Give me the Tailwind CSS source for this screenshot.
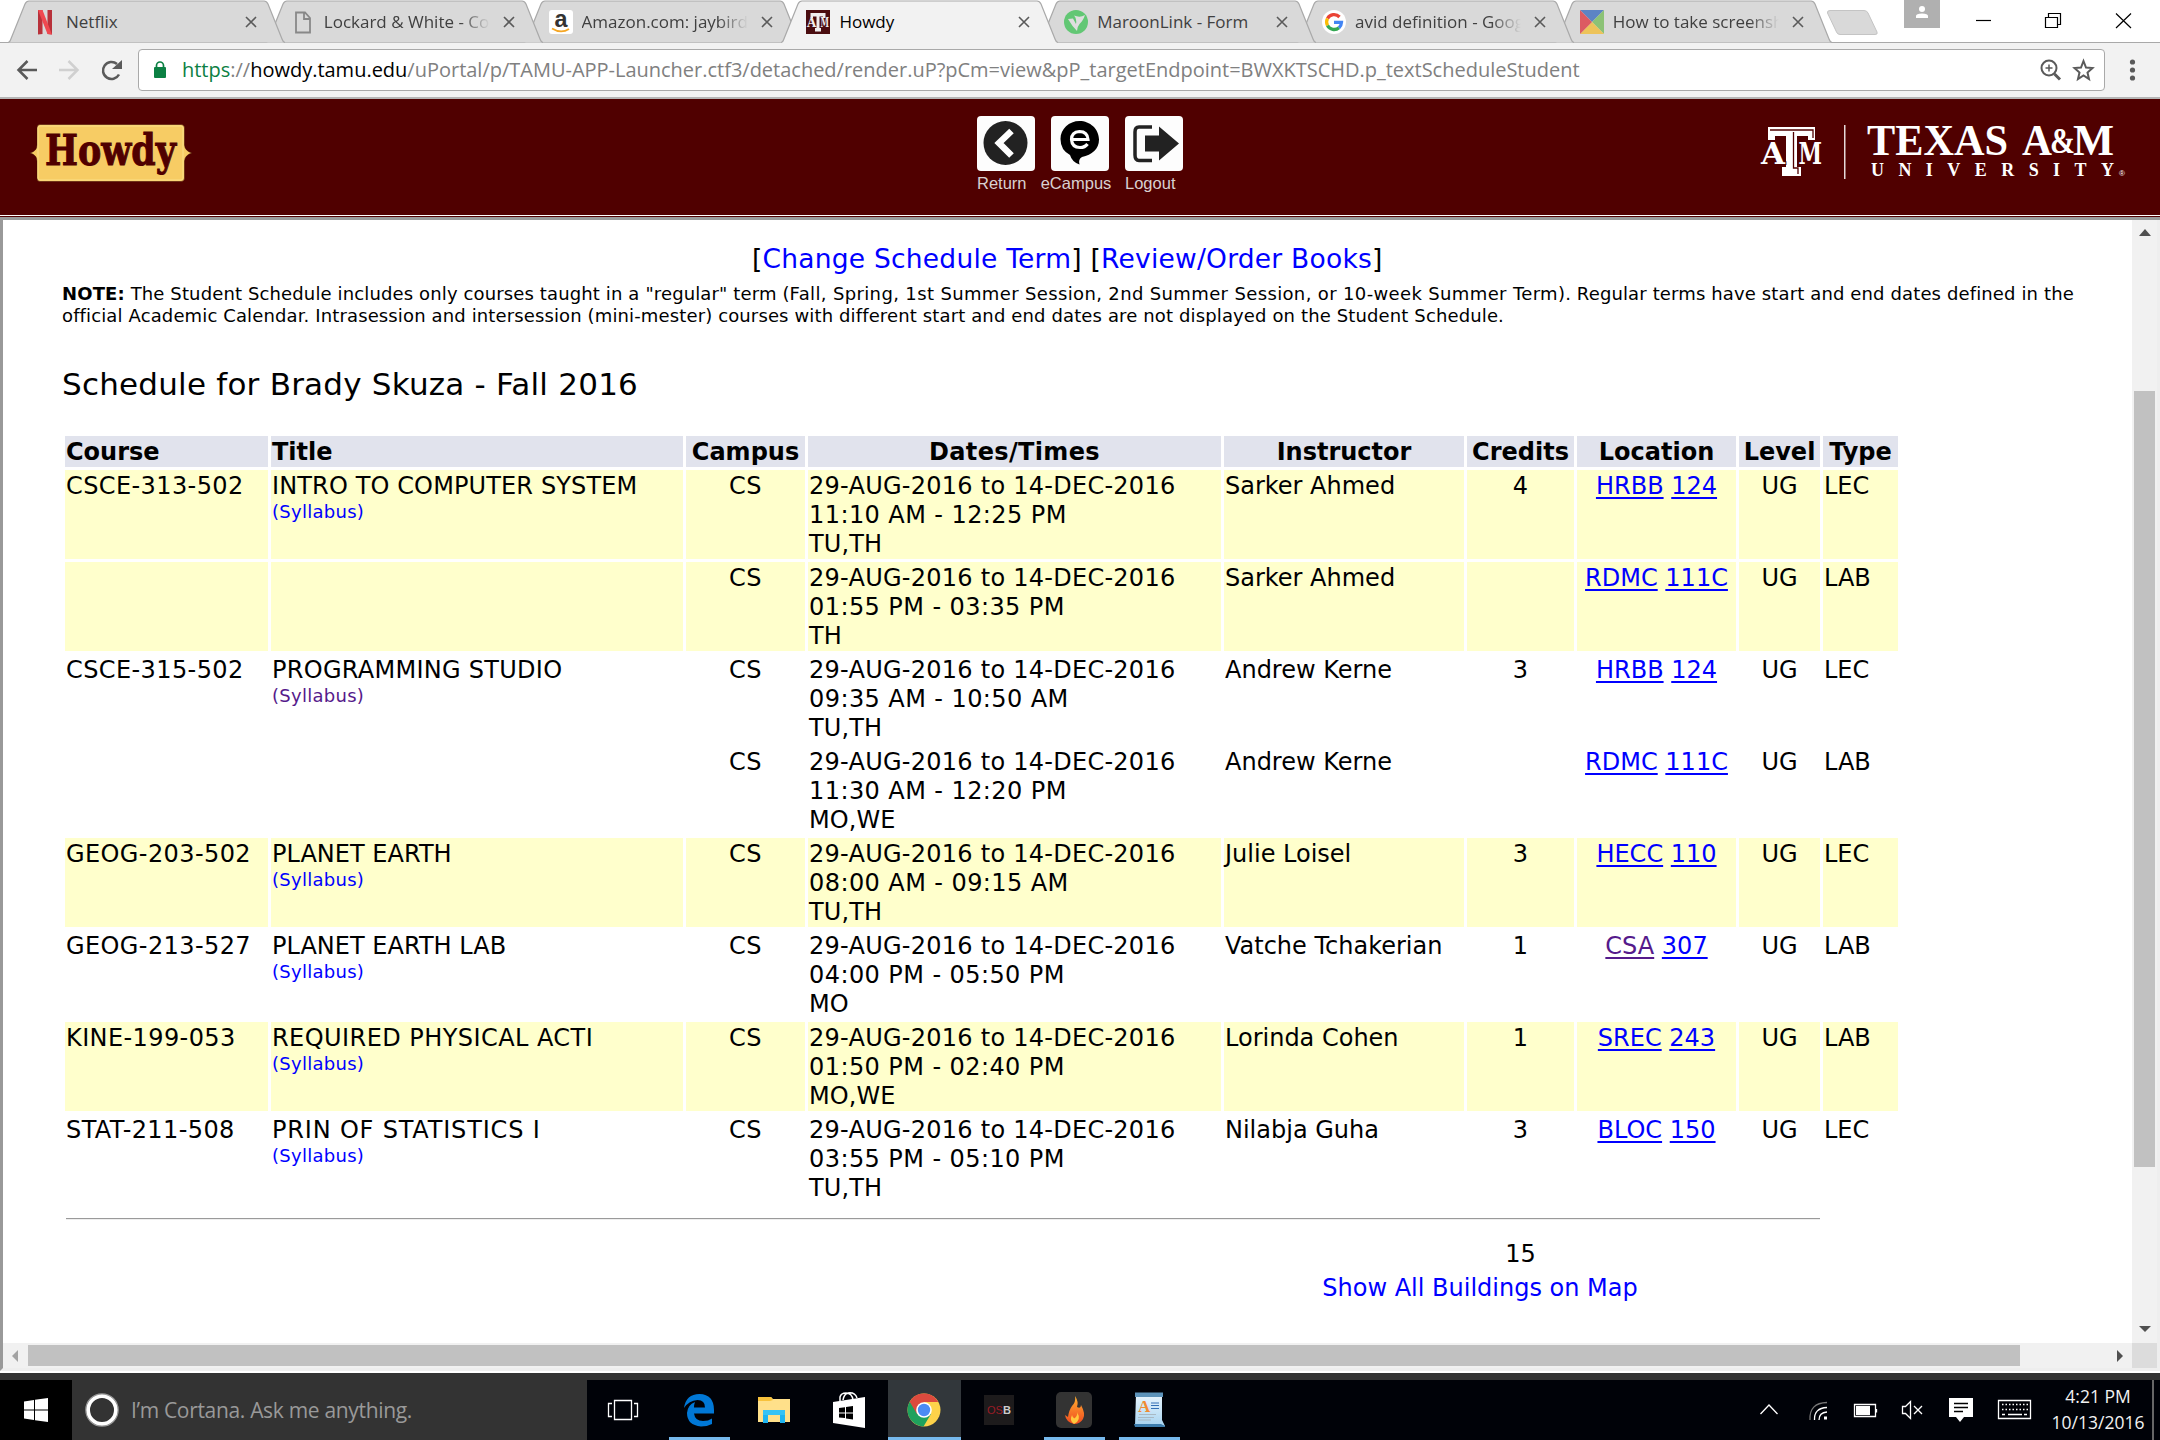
<!DOCTYPE html>
<html lang="en">
<head>
<meta charset="utf-8">
<title>Howdy</title>
<script src="https://cdn.jsdelivr.net/npm/@tailwindcss/browser@4"></script>
</head>
<body class="w-[2160px] h-[1440px] overflow-hidden flex flex-col bg-white font-['DejaVu_Sans',sans-serif] text-black">

<!-- Tab strip -->
<header class="relative h-[43px] shrink-0 bg-white border-b border-[#a9a9a9] font-['Open_Sans',sans-serif]">
  <div id="tabs" class="absolute left-[8px] top-0 flex h-[43px]"></div>
  <svg class="absolute left-[1825px] top-[8px]" width="56" height="30"><path d="M5 2.500H39Q42 2.500 43 5L52 24Q53 26.500 50 26.500H15Q12.500 26.500 11.500 24L2.500 5Q2 2.500 5 2.500Z" fill="#d9d9d9" stroke="#c4c4c4"/></svg>
  <div class="absolute left-[1904px] top-0 w-[36px] h-[28px] bg-[#b0b0b0] flex justify-center"><svg width="36" height="28"><circle cx="18" cy="9" r="3" fill="#fff"/><path d="M12 18V16Q12 13.500 18 13.500T24 16V18Z" fill="#fff"/></svg></div>
  <svg class="absolute left-[1970px] top-[8px]" width="170" height="26" fill="none" stroke="#000" stroke-width="1.200"><path d="M6 12.500H21"/><path d="M75.500 9.500H87.500V19.500H75.500ZM78.500 9.500V5.500H90.500V16.500H87.500"/><path d="M146 5.500L161 20M161 5.500L146 20"/></svg>
</header>

<!-- Toolbar -->
<nav class="h-[56px] shrink-0 bg-[#f2f2f2] border-b-2 border-[#b5b5b5] flex items-center pl-[14px] font-['Open_Sans',sans-serif]">
  <svg class="shrink-0" width="124" height="40" viewBox="14 50 124 40" fill="none" stroke="#5a5a5a" stroke-width="2.500">
    <path d="M37 70H19M27.500 61L18.500 70L27.500 79"/>
    <path d="M59 70H77M68.500 61L77.500 70L68.500 79" stroke="#d0d0d0"/>
    <path d="M119 74.500A8.500 8.500 0 1 1 117 64"/><path d="M122 60V69H112Z" fill="#5a5a5a" stroke="none"/>
  </svg>
  <div class="w-[1967px] h-[42px] bg-white border border-[#a9a9a9] rounded-[4px] flex items-center">
    <svg class="ml-[15px]" width="12" height="18" viewBox="0 0 12 18"><rect y="6" width="12" height="11" rx="1" fill="#0b8043"/><path d="M2.500 7V4.500a3.500 3.500 0 0 1 7 0V7" fill="none" stroke="#0b8043" stroke-width="1.700"/></svg>
    <div class="ml-[16px] text-[20px] tracking-[-0.010px] whitespace-nowrap text-[#808080]"><span class="text-[#0b8043]">https</span>://<span class="text-black">howdy.tamu.edu</span>/uPortal/p/TAMU-APP-Launcher.ctf3/detached/render.uP?pCm=view&amp;pP_targetEndpoint=BWXKTSCHD.p_textScheduleStudent</div>
    <svg class="ml-auto mr-[9px]" width="56" height="26" fill="none" stroke="#5a5a5a" stroke-width="2"><circle cx="10" cy="11" r="7.500"/><path d="M15.500 17L21 22.500" stroke-width="3"/><path d="M6.500 11H13.500M10 7.500V14.500" stroke-width="1.500"/><path d="M44.500 4L47 10.500L53.500 11L48.500 15.500L50 22L44.500 18.500L39 22L40.500 15.500L35.500 11L42 10.500Z"/></svg>
  </div>
  <svg class="ml-[22px]" width="12" height="26" fill="#5a5a5a"><circle cx="5.500" cy="5" r="2.600"/><circle cx="5.500" cy="13" r="2.600"/><circle cx="5.500" cy="21" r="2.600"/></svg>
</nav>

<!-- Howdy banner -->
<section class="h-[116px] shrink-0 bg-[#500000] flex items-start pl-[30px] font-['Liberation_Sans',sans-serif]">
  <svg class="mt-[20px] shrink-0" width="164" height="66" viewBox="30 119 164 66">
    <path d="M40 124.500H181Q184.500 124.500 184.500 128V145Q185 151 192 153Q185 155 184.500 161V178Q184.500 181.500 181 181.500H40Q37 181.500 37 178V161Q37 155 30 153Q37 151 37 145V128Q37 124.500 40 124.500Z" fill="#f7cc64" stroke="#3a0000" stroke-width="0.500"/>
    <path d="M40 126H181Q183 126 183 128V178Q183 180 181 180H40Q38 180 38 178V128Q38 126 40 126Z" fill="none" stroke="#fbe089" stroke-width="1"/>
    <text x="45" y="165" font-family="DejaVu Serif" font-weight="bold" font-size="43" textLength="131" lengthAdjust="spacingAndGlyphs" fill="#500000" stroke="#500000" stroke-width="1">Howdy</text>
  </svg>
  <div class="flex gap-[16px] mt-[17px] ml-[783px] text-[16.500px] leading-[22px] text-[#d9d0d0]">
    <div class="w-[58px]"><svg width="58" height="55"><rect width="58" height="55" rx="4" fill="#fdfdfd"/><circle cx="28.500" cy="27" r="22" fill="#222"/><path d="M34.500 15L22 27L34.500 39.500" fill="none" stroke="#fff" stroke-width="6.500"/></svg><div class="mt-[1px]">Return</div></div>
    <div class="w-[58px] flex flex-col items-center"><svg width="58" height="55"><rect width="58" height="55" rx="4" fill="#fdfdfd"/><path d="M28.500 5C39 5 48 13 48 23.500C48 33 41 39 31 41Q27 43 28.500 48.500Q21 46 19 39Q9.500 34 9.500 23C9.500 13 18 5 28.500 5Z" fill="#000"/><path d="M20.500 23.500H37Q36.500 15.500 28.500 15.500Q20.500 16 20.500 23.500Q21 31.500 29 31.500Q34 31.500 36.500 28" fill="none" stroke="#fff" stroke-width="3.200"/></svg><div class="mt-[1px] mr-[6px] -ml-[2px]">eCampus</div></div>
    <div class="w-[58px]"><svg width="58" height="55"><rect width="58" height="55" rx="4" fill="#fdfdfd"/><path d="M27 11H14Q10 11 10 16V39Q10 44.500 14 44.500H27" fill="none" stroke="#222" stroke-width="3.500"/><path d="M20 19.500H34V10.500L54 27.500L34 44.500V35.500H20Z" fill="#222"/></svg><div class="mt-[1px]">Logout</div></div>
  </div>
  <svg class="mt-[20px] ml-auto mr-[28px]" width="372" height="66" viewBox="1760 119 372 66" fill="#fff">
    <path d="M1768 127H1815V140H1808V136H1797V167H1801V176H1782V167H1786V136H1775V140H1768Z"/>
    <path d="M1770 130H1813V138M1793.500 132V168H1798V174" fill="none" stroke="#500000" stroke-width="1.300"/>
    <g stroke="#500000" stroke-width="2" paint-order="stroke" font-family="DejaVu Serif" font-weight="bold" font-size="30"><text x="1761" y="164" textLength="24" lengthAdjust="spacingAndGlyphs">A</text><text x="1798.500" y="164" textLength="23.500" lengthAdjust="spacingAndGlyphs">M</text></g>
    <rect x="1844" y="125" width="1.500" height="54" fill="#e5d8d8"/>
    <g font-family="Liberation Serif" font-weight="bold"><text x="1867" y="155" font-size="44" textLength="141" lengthAdjust="spacingAndGlyphs">TEXAS</text><text x="2022" y="155" font-size="44" textLength="30" lengthAdjust="spacingAndGlyphs">A</text><text x="2050" y="152.500" font-size="35" textLength="25" lengthAdjust="spacingAndGlyphs">&amp;</text><text x="2073" y="155" font-size="44" textLength="41" lengthAdjust="spacingAndGlyphs">M</text>
    <text x="1871" y="176" font-size="18" textLength="243">UNIVERSITY</text></g>
    <text x="2119" y="176" font-size="8" font-family="Liberation Sans">®</text>
  </svg>
</section>
<div class="h-[5px] shrink-0 bg-[#999] border-t border-white shadow-[inset_0_1px_0_#500000]"></div>

<!-- Schedule frame -->
<main class="h-[1151px] shrink-0 flex flex-col border-l-[3px] border-l-[#999] border-r-[3px] border-r-[#eee] border-b-[3px] border-b-[#eee]">
  <div class="h-[1123px] flex">
    <div class="flex-1 overflow-hidden pl-[59px] whitespace-nowrap">
      <p class="mt-[23px] ml-[690px] text-[26.500px] leading-[32px] tracking-[0.220px]">[<a class="text-[#0000ff]">Change Schedule Term</a>] [<a class="text-[#0000ff]">Review/Order Books</a>]</p>
      <p class="mt-[8px] text-[18px] leading-[22px] tracking-[0.130px]"><b>NOTE:</b> The Student Schedule includes only courses taught in a "regular" term (<span class="tracking-[0.360px]">Fall, Spring, 1st Summer Session, 2nd Summer Session, or 10-week Summer Term</span>). Regular terms have start and end dates defined in the<br>official Academic Calendar. Intrasession and intersession (mini-mester) courses with different start and end dates are not displayed on the Student Schedule.</p>
      <h1 class="mt-[38px] text-[31px] leading-[38px] tracking-[0.220px]">Schedule for Brady Skuza - Fall 2016</h1>
      <div id="schedule" class="mt-[33px] ml-[3px] grid grid-cols-[203px_412px_119px_413px_240px_107px_159px_81px_75px] gap-[3px] text-[24px] leading-[29px]"></div>
      <div class="mt-[15px] ml-[4px] w-[1754px] h-[2px] bg-[#9a9a9a] border-b border-[#eee]"></div>
      <div class="mt-[20px] ml-[1405px] w-[107px] text-center text-[24px] leading-[29px]">15</div>
      <div class="mt-[5px] ml-[1260px] w-[316px] text-center text-[24px] leading-[29px]"><a class="text-[#0000ff]">Show All Buildings on Map</a></div>
    </div>
    <div class="w-[25px] bg-[#f1f1f1] flex flex-col items-center">
      <svg class="mt-[9px]" width="12" height="8"><path d="M0 7L6 0L12 7Z" fill="#505050"/></svg>
      <div class="mt-[154px] w-[21px] h-[776px] bg-[#c1c1c1]"></div>
      <svg class="mt-[159px]" width="12" height="8"><path d="M0 0L6 6L12 0Z" fill="#505050"/></svg>
    </div>
  </div>
  <div class="h-[25px] bg-[#f1f1f1] flex items-center">
    <svg class="ml-[8px]" width="8" height="12"><path d="M7 0L1 6L7 12Z" fill="#a3a3a3"/></svg>
    <div class="ml-[9px] w-[1992px] h-[21px] bg-[#c1c1c1]"></div>
    <svg class="ml-[97px]" width="8" height="12"><path d="M0 0L6 6L0 12Z" fill="#505050"/></svg>
    <div class="ml-auto w-[25px] h-[25px] bg-[#dcdcdc]"></div>
  </div>
</main>
<div class="h-[2px] shrink-0 bg-white"></div>

<!-- Windows taskbar -->
<footer class="h-[67px] shrink-0 bg-[#333] flex items-end font-['Open_Sans',sans-serif]">
  <div class="w-[72px] h-[60px] bg-black flex items-center justify-center"><svg width="24" height="24" fill="#fff"><path d="M0 3.500L10 2V11.500H0ZM11 1.800L24 0V11.500H11ZM0 12.500H10V22L0 20.500ZM11 12.500H24V24L11 22.200Z"/></svg></div>
  <div class="w-[516px] h-[60px] flex items-center"><svg class="ml-[13px]" width="34" height="34"><circle cx="17" cy="17" r="14" fill="none" stroke="#fff" stroke-width="4"/><circle cx="17" cy="17" r="16.200" fill="none" stroke="#999" stroke-width="1.200"/></svg><span class="ml-[12px] mt-[2px] text-[21px] tracking-[-0.320px] text-[#999] whitespace-nowrap">I’m Cortana. Ask me anything.</span></div>
  <div class="flex-1 h-[60px] bg-[#000208] flex">
    <svg class="shrink-0" width="612" height="60" viewBox="588 1380 612 60">
      <defs><linearGradient id="fl" x2="0" y2="1"><stop stop-color="#ffb030"/><stop offset="1" stop-color="#f04a20"/></linearGradient><linearGradient id="wp" x2="0" y2="1"><stop stop-color="#eaf5fd"/><stop offset="1" stop-color="#a8d4f0"/></linearGradient></defs>
      <path d="M615.500 1400.500H632.500V1419.500H615.500ZM613 1403.500H609.500V1416.500H613M635 1403.500H638.500V1416.500H635" fill="none" stroke="#fff" stroke-width="1.300"/>
      <path d="M685 1408Q687 1394 700.500 1394Q715 1394.500 715 1410V1413.500H695Q696 1421 704 1421Q709.500 1421 713 1418.500V1424Q708 1426.500 702 1426.500Q688 1425 688 1413Q688.500 1405 696 1402Q695 1404.500 695 1407.500H706Q706 1400 698.500 1400Q690 1400.500 685 1408Z" fill="#0078d7"/>
      <path d="M759 1397H772L774 1399H791V1422H759Z" fill="#ffe08a"/><path d="M759 1397H772L774 1400L771 1401H759Z" fill="#f8c23c"/><path d="M764 1423V1410H786V1423H781V1415H769V1423Z" fill="#1fb4ef"/><path d="M764 1410H786V1415H764Z" fill="#35c3f5"/>
      <path d="M834 1402L866 1397V1428L834 1423Z" fill="#fff"/><path d="M841 1401V1397Q842 1393 847 1393Q853 1393 854 1400M844 1400Q845 1394 849 1393Q856 1392 858 1398" fill="none" stroke="#fff" stroke-width="1.500"/><path d="M840 1408L846 1407.300V1412.500H840ZM847 1407L854 1406V1412.500H847ZM840 1413.500H846V1418L840 1417.500ZM847 1413.500H854V1419.500L847 1418.500Z" fill="#000"/>
      <rect x="889" y="1380" width="73" height="60" fill="#32373b"/>
      <circle cx="925" cy="1410" r="16.500" fill="#fdd24a"/><path d="M925 1410L910.700 1401.700A16.500 16.500 0 0 0 924.500 1426.500L932 1414Z" fill="#1fa15d"/><path d="M910.700 1401.700A16.500 16.500 0 0 1 939.300 1402H925L918 1414Z" fill="#dc4a3e"/><circle cx="925" cy="1410" r="7.800" fill="#fff"/><circle cx="925" cy="1410" r="6.200" fill="#4b8bf4"/>
      <rect x="985" y="1395" width="30" height="30" fill="#1d1b1c"/><text x="988" y="1413.500" font-size="11" font-family="Liberation Sans" textLength="24" lengthAdjust="spacingAndGlyphs" fill="#9b1c26">OS<tspan fill="#ccc" font-weight="bold">B</tspan></text>
      <rect x="1057" y="1392" width="36" height="36" rx="5" fill="#333"/><path d="M1076 1396Q1080 1402 1078 1407Q1082 1409 1082 1405Q1087 1414 1084 1419Q1081 1424 1075 1424Q1067 1422 1066 1415L1069 1417Q1070 1410 1073 1406Q1077 1402 1076 1396Z" fill="url(#fl)"/><path d="M1075 1424Q1070 1421 1073 1415Q1074 1419 1076 1418Q1079 1415 1078 1412Q1083 1420 1075 1424Z" fill="#ffc93d"/>
      <path d="M1137 1394H1163V1420L1166 1426H1136Z" fill="url(#wp)"/><rect x="1136" y="1392.500" width="28" height="4.500" fill="#5d93ba"/><path d="M1135 1424H1162L1166 1426V1427H1136Z" fill="#3d7dad"/><text x="1139" y="1411.500" font-family="Liberation Serif" font-weight="bold" font-size="17" fill="#f08b32">A</text><path d="M1152 1403H1160M1152 1405.500H1160M1152 1408.500H1160" stroke="#3670b5"/><path d="M1140 1414.500H1157M1139 1417.500H1155M1139 1420H1152" stroke="#a9b9c4"/>
      <path d="M670 1437H731V1440H670ZM889 1437H962V1440H889ZM1045 1437H1106V1440H1045ZM1120 1437H1181V1440H1120Z" fill="#76b9ed"/>
    </svg>
    <svg class="ml-[550px] shrink-0" width="290" height="60" viewBox="1750 1380 290 60" fill="none" stroke="#fff" stroke-width="1.300">
      <path d="M1761.500 1414L1770 1405L1778.500 1414"/>
      <path d="M1811 1420Q1810 1403 1828 1402.500" stroke="#777"/><path d="M1815.500 1420Q1815 1408 1828 1407.500M1820 1420Q1820 1412.500 1828 1412"/><rect x="1825" y="1416.500" width="3" height="3" fill="#fff" stroke="none"/>
      <path d="M1855.500 1404.500H1876.500V1416.500H1855.500ZM1877.500 1409V1412.500"/><rect x="1857" y="1406" width="14" height="9" fill="#fff" stroke="none"/>
      <path d="M1903.500 1406.500H1906.500L1911.500 1401.500V1418.500L1906.500 1413.500H1903.500ZM1915 1406L1923 1414M1923 1406L1915 1414"/>
      <path d="M1950 1398H1974V1417H1965L1961 1422L1957 1417H1950Z" fill="#fff" stroke="none"/><path d="M1955 1403.500H1969M1955 1407.500H1969M1955 1411.500H1964" stroke="#000"/>
      <path d="M1999.500 1400.500H2031.500V1418.500H1999.500Z"/><path d="M2003 1404.500H2029M2003 1409.500H2029" stroke-dasharray="1.500 2"/><path d="M2003 1414.500H2006M2009 1414.500H2023M2025 1414.500H2028"/>
    </svg>
    <div class="w-[108px] ml-[5px] pt-[3px] text-center text-[17.500px] leading-[26px] text-[#f2f2f2] whitespace-nowrap">4:21 PM<br>10/13/2016</div>
    <div class="w-[2px] h-[60px] bg-[#666] ml-auto mr-[6px]"></div>
  </div>
</footer>

<script>
const tabs = [
  ['Netflix', '<path d="M5 0H9.500V24L5 24.500ZM14.500 0H19V24.500L14.500 24Z" fill="#b8313a"/><path d="M5 0H9.500L19 24.500L14.500 24Z" fill="#f04850"/>'],
  ['Lockard &amp; White - Co', '<path d="M5 2.500H14L19 8V22.500H5ZM13 2.500V9H19" fill="none" stroke="#888" stroke-width="1.800"/>'],
  ['Amazon.com: jaybird', '<rect width="24" height="24" rx="3" fill="#fff"/><text x="5.500" y="17" font-family="Liberation Sans" font-weight="bold" font-size="23" textLength="13" lengthAdjust="spacingAndGlyphs" fill="#333">a</text><path d="M3 18.500Q12 24 20 19" fill="none" stroke="#f5a623" stroke-width="1.800"/>'],
  ['Howdy', '<rect width="24" height="24" fill="#4a0d10"/><path d="M4.500 3H19.500V8H17V6.500H13.500V18H15V21.500H9V18H10.500V6.500H7V8H4.500Z" fill="#eee"/><g font-family="DejaVu Serif" font-weight="bold" font-size="12" fill="#eee"><text x="1" y="17" textLength="8">A</text><text x="14.500" y="17" textLength="8.500" lengthAdjust="spacingAndGlyphs">M</text></g>'],
  ['MaroonLink - Form', '<circle cx="12" cy="12" r="12" fill="#62c774"/><path d="M4 9L9 8.500L12 14Q13 9 10 5.500Q16 8 21 5Q19 11 15.500 14Q13 17 13 21Q8 16 4 9Z" fill="#dedede"/>'],
  ['avid definition - Goog', '<circle cx="12" cy="12" r="12" fill="#fff"/><g fill="none" stroke-width="3.300"><path d="M17.500 7A7.500 7.500 0 0 0 5.500 8.500" stroke="#ea4335"/><path d="M5.500 8.500A7.500 7.500 0 0 0 5.500 15.500" stroke="#fbbc05"/><path d="M5.500 15.500A7.500 7.500 0 0 0 17 17.700" stroke="#34a853"/><path d="M17 17.700A7.500 7.500 0 0 0 19.500 12.300H12" stroke="#4285f4"/></g>'],
  ['How to take screensh', '<path d="M0 0H24L12 12Z" fill="#5c84c4"/><path d="M24 0V24L12 12Z" fill="#8cc276"/><path d="M24 24H0L12 12Z" fill="#edc35a"/><path d="M0 24V0L12 12Z" fill="#dc5b62"/>']
];
document.getElementById('tabs').innerHTML = tabs.map(([t, icon], i) => {
  const on = i === 3;
  return `<div class="relative w-[257.800px] h-[43px] ${on ? 'z-20' : ['z-10','z-[9]','z-[8]','','z-[7]','z-[6]','z-[5]'][i]}">
    <svg class="absolute left-0 top-0" width="278" height="43"><path d="M0 42.500Q2 42 2.500 40L17 4Q18.500 1 21 1H256Q258.500 1 260 4L274 39Q275 42 277 42.500${on ? 'V43H0Z' : ''}" fill="${on ? '#f2f2f2' : '#d9d9d9'}" stroke="${on ? 'none' : '#a9a9a9'}" stroke-width="1.200"/>${on ? '<path d="M0 42.500Q2 42 2.500 40L17 4Q18.500 1 21 1H256Q258.500 1 260 4L274 39Q275 42 277 42.500" fill="none" stroke="#a9a9a9" stroke-width="1.200"/>' : ''}</svg>
    <div class="relative flex items-center pl-[25px] pt-[10px]">
      <svg class="shrink-0" width="24" height="25">${icon}</svg>
      <div class="ml-[9px] -mt-[2px] w-[166px] h-[24px] overflow-hidden whitespace-nowrap text-[17px] leading-[23px] ${t.length > 17 ? '[mask-image:linear-gradient(to_right,black_82%,transparent_100%)]' : ''} ${on ? 'text-black' : 'text-[#404040]'}">${t}</div>
      <svg class="shrink-0 ml-[13px] -mt-[2px]" width="12" height="12"><path d="M1 1L11 11M11 1L1 11" stroke="#5a5a5a" stroke-width="1.600"/></svg>
    </div></div>`;
}).join('');

const D = '29-AUG-2016 to 14-DEC-2016';
const rows = [
  ['CSCE-313-502', 'INTRO TO COMPUTER SYSTEM', '11:10 AM - 12:25 PM', 'TU,TH', 'Sarker Ahmed', '4', 'HRBB', '124', 'LEC', 1],
  ['', '', '01:55 PM - 03:35 PM', 'TH', 'Sarker Ahmed', '', 'RDMC', '111C', 'LAB', 1],
  ['CSCE-315-502', 'PROGRAMMING STUDIO', '09:35 AM - 10:50 AM', 'TU,TH', 'Andrew Kerne', '3', 'HRBB', '124', 'LEC', 0],
  ['', '', '11:30 AM - 12:20 PM', 'MO,WE', 'Andrew Kerne', '', 'RDMC', '111C', 'LAB', 0],
  ['GEOG-203-502', 'PLANET EARTH', '08:00 AM - 09:15 AM', 'TU,TH', 'Julie Loisel', '3', 'HECC', '110', 'LEC', 1],
  ['GEOG-213-527', 'PLANET EARTH LAB', '04:00 PM - 05:50 PM', 'MO', 'Vatche Tchakerian', '1', 'CSA', '307', 'LAB', 0],
  ['KINE-199-053', 'REQUIRED PHYSICAL ACTI', '01:50 PM - 02:40 PM', 'MO,WE', 'Lorinda Cohen', '1', 'SREC', '243', 'LAB', 1],
  ['STAT-211-508', 'PRIN OF STATISTICS I', '03:55 PM - 05:10 PM', 'TU,TH', 'Nilabja Guha', '3', 'BLOC', '150', 'LEC', 0]
];
const titleTracking = {
  'INTRO TO COMPUTER SYSTEM': 'tracking-[0.130px]',
  'PROGRAMMING STUDIO': 'tracking-[0.280px]',
  'PLANET EARTH': 'tracking-[0.020px]',
  'PLANET EARTH LAB': 'tracking-[0.020px]',
  'REQUIRED PHYSICAL ACTI': 'tracking-[0.440px]',
  'PRIN OF STATISTICS I': 'tracking-[0.820px]'
};
const head = ['Course', 'Title', 'Campus', 'Dates/Times', 'Instructor', 'Credits', 'Location', 'Level', 'Type'];
let html = head.map((h, i) => `<div class="h-[31px] bg-[#e1e3ed] pt-[2px] font-bold ${i < 2 ? 'pl-[1px]' : 'text-center'} ${i === 3 ? 'tracking-[0.350px]' : ''}">${h}</div>`).join('');
for (const [c, t, time, day, who, cr, b, room, type, y] of rows) {
  const cell = (s, x) => `<div class="h-[89px] pt-[2px] ${y ? 'bg-[#ffffcc]' : ''} ${x}">${s}</div>`;
  const visitedSyl = c === 'CSCE-315-502', visitedLoc = b === 'CSA';
  html += cell(c, 'pl-[1px] tracking-[0.400px]')
    + cell(t ? `<div class="${titleTracking[t]}">${t}</div><a class="block text-[18px] leading-[22px] tracking-[0.270px] ${visitedSyl ? 'text-[#551a8b]' : 'text-[#0000ff]'}">(Syllabus)</a>` : '', 'pl-[1px]')
    + cell('CS', 'text-center tracking-[0.500px]')
    + cell(`<div class="tracking-[0.260px]">${D}</div><div class="tracking-[0.420px]">${time}</div><div class="tracking-[0.100px]">${day}</div>`, 'pl-[1px]')
    + cell(who, 'pl-[1px]')
    + cell(cr, 'text-center')
    + cell(`<a class="underline decoration-2 underline-offset-[3px] ${visitedLoc ? 'text-[#551a8b]' : 'text-[#0000ff]'}">${b}</a> <a class="underline decoration-2 underline-offset-[3px] text-[#0000ff]">${room}</a>`, 'text-center')
    + cell('UG', 'text-center')
    + cell(type, 'pl-[1px]');
}
document.getElementById('schedule').innerHTML = html;
</script>
</body>
</html>
